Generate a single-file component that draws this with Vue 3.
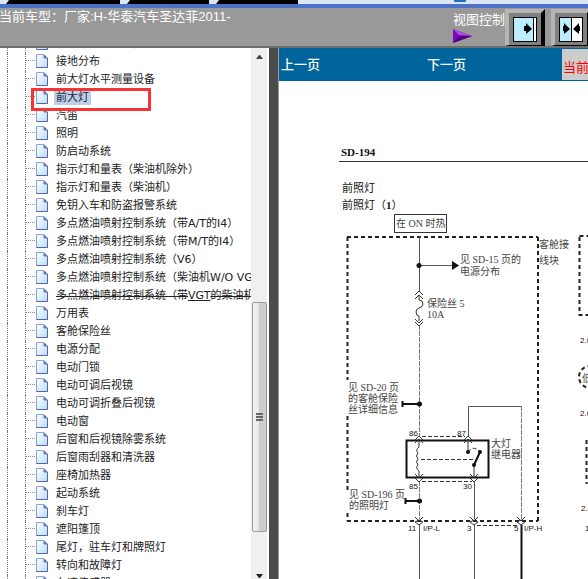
<script setup>
import { ref } from "vue";

// 目录树
const items = ref([
  "数据连接和电器信息",
  "接地分布",
  "前大灯水平测量设备",
  "前大灯",
  "汽笛",
  "照明",
  "防启动系统",
  "指示灯和量表（柴油机除外）",
  "指示灯和量表（柴油机）",
  "免钥入车和防盗报警系统",
  "多点燃油喷射控制系统（带A/T的I4）",
  "多点燃油喷射控制系统（带M/T的I4）",
  "多点燃油喷射控制系统（V6）",
  "多点燃油喷射控制系统（柴油机W/O VGT）",
  "多点燃油喷射控制系统（带VGT的柴油机）",
  "万用表",
  "客舱保险丝",
  "电源分配",
  "电动门锁",
  "电动可调后视镜",
  "电动可调折叠后视镜",
  "电动窗",
  "后窗和后视镜除雾系统",
  "后窗雨刮器和清洗器",
  "座椅加热器",
  "起动系统",
  "刹车灯",
  "遮阳篷顶",
  "尾灯，驻车灯和牌照灯",
  "转向和故障灯",
  "车速传感器",
]);
const selected = ref("前大灯");
const marked = "前大灯";
const obsolete = "多点燃油喷射控制系统（带VGT的柴油机）";
</script>

<template>
  <div class="wrap">
    <!-- 浏览器标签 -->
    <div class="tabs">
      <i class="tab wide"></i>
      <i class="tab"></i>
      <i class="tab"></i>
      <i class="mark"></i>
    </div>

    <header class="header">
      <h1>当前车型：厂家:H-华泰汽车圣达菲2011-</h1>
      <div class="view">
        <span>视图控制</span>
        <svg width="20" height="16" viewBox="0 0 20 16">
          <path d="M0 1L19 8L0 15Z" fill="#7a08b8" />
          <path d="M0 1L19 8L6 7Z" fill="#b04be0" />
          <path d="M0 15L19 8L6 8Z" fill="#4e0080" />
        </svg>
      </div>
      <button class="tool" aria-label="隐藏目录">
        <svg width="24" height="25" viewBox="0 0 24 25">
          <rect width="24" height="25" fill="#000" />
          <rect x="1" y="1" width="19" height="23" fill="#bdeeff" />
          <rect x="21" y="1" width="2" height="23" fill="#fff" />
          <path d="M11 9H13V6L19 12L13 17V14H11Z" fill="#000" />
        </svg>
      </button>
      <button class="tool" aria-label="并排显示">
        <svg width="24" height="25" viewBox="0 0 24 25">
          <rect width="24" height="25" fill="#000" />
          <rect x="1" y="1" width="11" height="23" fill="#bdeeff" />
          <rect x="13" y="1" width="10" height="23" fill="#fff" />
          <path d="M4 9H5V6L11 12L5 17V14H4ZM21 9H20V6L14 12L20 17V14H21Z" fill="#000" />
        </svg>
      </button>
    </header>

    <main class="main">
      <nav class="side">
        <ul class="tree">
          <li v-for="item in items" :key="item">
            <svg class="file" width="13" height="15" viewBox="0 0 13 15">
              <defs>
                <linearGradient id="page" x1="0" y1="0" x2="1" y2="1">
                  <stop offset="0" stop-color="#fff" />
                  <stop offset="1" stop-color="#b8dbfa" />
                </linearGradient>
              </defs>
              <path d="M0.500 0.500H8L11.500 4V13.500H0.500Z" fill="url(#page)" stroke="#86a3dc" />
              <path d="M11.500 4V13.500H0.500" fill="none" stroke="#5565a6" />
              <path d="M8 1V4H11Z" fill="#6d80bd" stroke="#6577b5" />
            </svg>
            <a href="#" :class="{ on: item === selected }" @click.prevent="selected = item">
              <template v-if="item === obsolete"><s>多点燃油喷射控制系统（带</s><u>VGT</u><s>的柴油机）</s></template>
              <template v-else>{{ item }}</template>
            </a>
            <i v-if="item === marked" class="frame"></i>
          </li>
        </ul>
        <!-- 滚动条 -->
        <div class="bar">
          <svg width="7" height="5" viewBox="0 0 7 5"><path d="M0 4L3 0H4L7 4Z" fill="#444" /></svg>
          <div class="thumb"><i></i><i></i><i></i></div>
          <svg width="7" height="5" viewBox="0 0 7 5"><path d="M0 0H7L4 4H3Z" fill="#222" /></svg>
        </div>
      </nav>
      <div class="split"></div>

      <section class="content">
        <div class="pager">
          <a href="#">上一页</a>
          <a href="#">下一页</a>
          <span>当前</span>
        </div>
        <!-- 电路图 -->
        <svg class="diagram" width="309" height="498" viewBox="279 81 309 498">
          <g class="head">
            <text x="341" y="156" class="bold">SD-194</text>
            <text x="342" y="192">前照灯</text>
            <text x="342" y="209">前照灯（<tspan class="bold">1</tspan>）</text>
          </g>
          <path class="thin" d="M339 161.500H588" />
          <rect class="thin" x="394.500" y="214.500" width="52" height="18" />
          <text x="396" y="227" class="note">在 ON 时热</text>

          <g class="note">
            <text x="539" y="248">客舱接</text>
            <text x="539" y="264">线块</text>
            <text x="460" y="263">见 SD-15 页的</text>
            <text x="460" y="275">电源分布</text>
            <text x="427" y="307">保险丝 5</text>
            <text x="427" y="318">10A</text>
            <text x="348" y="391">见 SD-20 页</text>
            <text x="348" y="402">的客舱保险</text>
            <text x="348" y="413">丝详细信息</text>
            <text x="491" y="447">大灯</text>
            <text x="491" y="458">继电器</text>
            <text x="349" y="498">见 SD-196 页</text>
            <text x="349" y="509">的照明灯</text>
          </g>

          <!-- 客舱接线块 -->
          <path class="dash" d="M347 237H538M347 521H538M347.500 237V380M347.500 416V490M347.500 513V521M538 237V521" />
          <path class="dash" d="M579.500 237V315H588M579.500 236H588" />
          <path class="dash" d="M586.500 440V484" />
          <circle class="dash" cx="590" cy="377" r="11" />

          <!-- 导线 -->
          <path class="wire" d="M419.500 237V291" />
          <path class="wire faint" d="M419.500 325V437M419.500 481V519M521.500 406V520" />
          <path class="wire" d="M468.500 437V406.500H521M474.500 481V519" />
          <path class="wire" d="M419.500 525V579M474.500 525V579" />
          <path class="thick" d="M521.500 525V579" />
          <path class="wire" d="M419 265.500H453" />
          <path d="M452 261L459 265.500L452 270Z" />
          <circle cx="419" cy="265.500" r="2.500" />

          <!-- 保险丝 -->
          <path class="line" d="M415 295L419 291L423 295M415 299L419 295L423 299M419 296V300Q423 300 423 304Q423 307 419 308Q416 309 416 312Q416 316 419 316V321M415 319L419 323L423 319M415 322L419 326L423 322" />
          <path class="thick" d="M403 404H419M405 501H419M402.500 401V407M405.500 498V504" />
          <circle cx="419.500" cy="404" r="2.500" />
          <circle cx="419.500" cy="501" r="2.500" />

          <!-- 继电器 -->
          <rect class="relay" x="406.500" y="440.500" width="82" height="37" />
          <path class="small-dash" d="M422 436.500H465M422 481.500H472M421 459.500H474M477 525.500H519" />
          <path class="line" d="M419 441V447Q415 450 418 453Q415 456 418 459Q415 462 418 465Q415 468 419 471V477" />
          <path class="line" d="M415 443L419 439L423 443M415 440L419 436L423 440M464 443L468 439L472 443M464 440L468 436L472 440M468 440V452" />
          <path class="small-dash" d="M468 452Q473 445 479 451" />
          <path class="thick" d="M480 452L474 465" />
          <path class="line" d="M474 465V478" />
          <circle cx="468" cy="452" r="2" />
          <circle cx="480" cy="452" r="2" />
          <circle cx="474" cy="465" r="2" />
          <path class="line" d="M415 474L419 478L423 474M415 478L419 482L423 478M470 474L474 478L478 474M470 478L474 482L478 478" />

          <!-- 插接器 -->
          <path class="line" d="M415 517L419 521L423 517M415 522L419 525L423 522L419 520ZM470 517L474 521L478 517M470 522L474 525L478 522L474 520ZM517 517L521 521L525 517M517 522L521 525L525 522L521 520Z" />
          <g class="pin">
            <text x="409" y="436">86</text>
            <text x="457" y="436">87</text>
            <text x="409" y="489">85</text>
            <text x="463" y="489">30</text>
            <text x="408" y="531">11</text>
            <text x="423" y="531">I/P-L</text>
            <text x="467" y="531">3</text>
            <text x="514" y="531">5</text>
            <text x="524" y="531">I/P-H</text>
            <text x="580" y="343">2.0</text>
            <text x="580" y="416">2.0</text>
            <text x="581" y="511">2.0</text>
            <text x="585" y="531">1</text>
            <text x="392" y="584">2.0R/B</text>
            <text x="457" y="584">2.0R</text>
            <text x="504" y="584">2.0B</text>
          </g>
          <text x="582" y="382" class="note">低</text>
        </svg>
      </section>
    </main>
  </div>
</template>

<style>
body {
  margin: 0;
  overflow: hidden;
}
</style>

<style scoped>
.wrap {
  display: flex;
  flex-direction: column;
  height: 100vh;
  overflow: hidden;
  background: #fff;
  font-family: "Liberation Sans", "Noto Sans CJK SC", sans-serif;
  font-size: 13px;
}
.tabs {
  display: flex;
  gap: 7px;
  height: 4px;
  padding-left: 6px;
  background: #dce5f5;
  border-bottom: 4px solid #4c72c8;
}
.tab {
  width: 82px;
  height: 4px;
  background: #000;
  clip-path: polygon(3px 0, 100% 0, 100% 100%, 0 100%);
}
.tab.wide {
  width: 114px;
}
.mark {
  width: 12px;
  height: 2px;
  margin-left: 149px;
  background: #1c6cc8;
}
.header {
  display: flex;
  flex: none;
  height: 38px;
  background: #999;
  border-bottom: 2px solid #6e6e6e;
  color: #fff;
  overflow: hidden;
}
h1 {
  flex: 1;
  margin: 0 0 0 -1px;
  font-size: 13px;
  font-weight: normal;
  line-height: 17px;
  white-space: nowrap;
}
.view {
  display: flex;
  flex-direction: column;
  width: 52px;
  padding-top: 3px;
  line-height: 17px;
  white-space: nowrap;
}
.tool {
  box-sizing: border-box;
  flex: none;
  width: 40px;
  height: 37px;
  margin: 1px 6px 0 0;
  padding: 4px 4px 3px;
  background: #808080;
  border: 4px solid #b5b5b5;
  border-right-color: #000;
  border-bottom: 1px solid #000;
}
.tool:last-child {
  margin-right: -3px;
}
.tool svg {
  display: block;
}
.main {
  display: flex;
  flex: 1;
  min-height: 0;
}
.side {
  display: flex;
  flex: none;
  width: 269px;
  overflow: hidden;
}
.tree {
  flex: 1;
  min-width: 0;
  margin: -13px 0 0;
  padding: 0 0 0 7px;
  list-style: none;
  overflow: hidden;
  font-family: "DejaVu Sans", "Noto Sans CJK SC", sans-serif;
  font-size: 11px;
  line-height: 18px;
}
.tree li {
  position: relative;
  display: flex;
  align-items: center;
  height: 18px;
  border-left: 1px dotted #777;
  white-space: nowrap;
}
.tree li::before {
  content: "";
  flex: none;
  width: 9px;
  height: 18px;
  margin-left: 17px;
  border-left: 1px dotted #777;
  background: repeating-linear-gradient(90deg, #888 0 1px, #fff 1px 2px) 0 7px / 9px 1px no-repeat;
}
.file {
  flex: none;
  margin: 0 5px 1px 1px;
}
.tree a {
  padding: 0 2px;
  color: #222;
  line-height: 14px;
  text-decoration: none;
}
.tree a.on {
  background: #bcd0ee;
}
.tree s {
  text-decoration: underline;
  text-decoration-skip-ink: none;
  text-underline-offset: -3px;
}
.frame {
  position: absolute;
  z-index: 1;
  left: 23px;
  top: -1px;
  box-sizing: border-box;
  width: 120px;
  height: 23px;
  border: 3px solid #f73434;
}
.bar {
  display: flex;
  flex-direction: column;
  align-items: center;
  justify-content: space-between;
  box-sizing: border-box;
  width: 16px;
  margin-right: 2px;
  padding-top: 7px;
  background: #f0f0f0;
}
.thumb {
  display: flex;
  flex-direction: column;
  align-items: center;
  justify-content: center;
  gap: 1px;
  box-sizing: border-box;
  width: 15px;
  height: 44%;
  margin-top: 200px;
  border: 1px solid #999;
  border-radius: 2px;
  background: linear-gradient(90deg, #f5f5f5, #e6e6e6 45%, #cbcbd0 50%, #d0d0d4);
}
.thumb i {
  width: 7px;
  height: 2px;
  background: #666;
}
.split {
  box-sizing: border-box;
  flex: none;
  width: 10px;
  background: #4b4b4b;
  border-right: 1px solid #999;
}
.content {
  flex: 1;
  min-width: 0;
  overflow: hidden;
}
.pager {
  display: flex;
  align-items: center;
  height: 33px;
  padding-left: 2px;
  background: #00659c;
  white-space: nowrap;
}
.pager a {
  flex: none;
  width: 146px;
  color: #fff;
  font-weight: 500;
  line-height: 30px;
  text-decoration: none;
}
.pager a + a {
  width: 135px;
}
.pager span {
  flex: 1;
  min-width: 0;
  height: 31px;
  padding-left: 1px;
  background: #ccc;
  color: #f00;
  line-height: 38px;
  overflow: hidden;
}
.diagram {
  display: block;
  font-family: "Liberation Serif", "Noto Sans CJK SC", serif;
  fill: #111;
}
.head {
  font-size: 11px;
}
.bold {
  font-weight: bold;
}
.note {
  font-size: 10px;
  fill: #444;
}
.pin {
  font-family: "Liberation Sans", sans-serif;
  font-size: 8px;
}
.thin,
.wire,
.line,
.thick,
.dash,
.small-dash,
.relay {
  fill: none;
  stroke: #333;
}
.wire {
  stroke: #555;
}
.faint {
  stroke: #777;
  stroke-dasharray: 5 1;
}
.thick,
.relay {
  stroke: #111;
  stroke-width: 2px;
}
.dash {
  stroke: #222;
  stroke-width: 2px;
  stroke-dasharray: 4 3;
}
.small-dash {
  stroke-dasharray: 4 2;
}
</style>
